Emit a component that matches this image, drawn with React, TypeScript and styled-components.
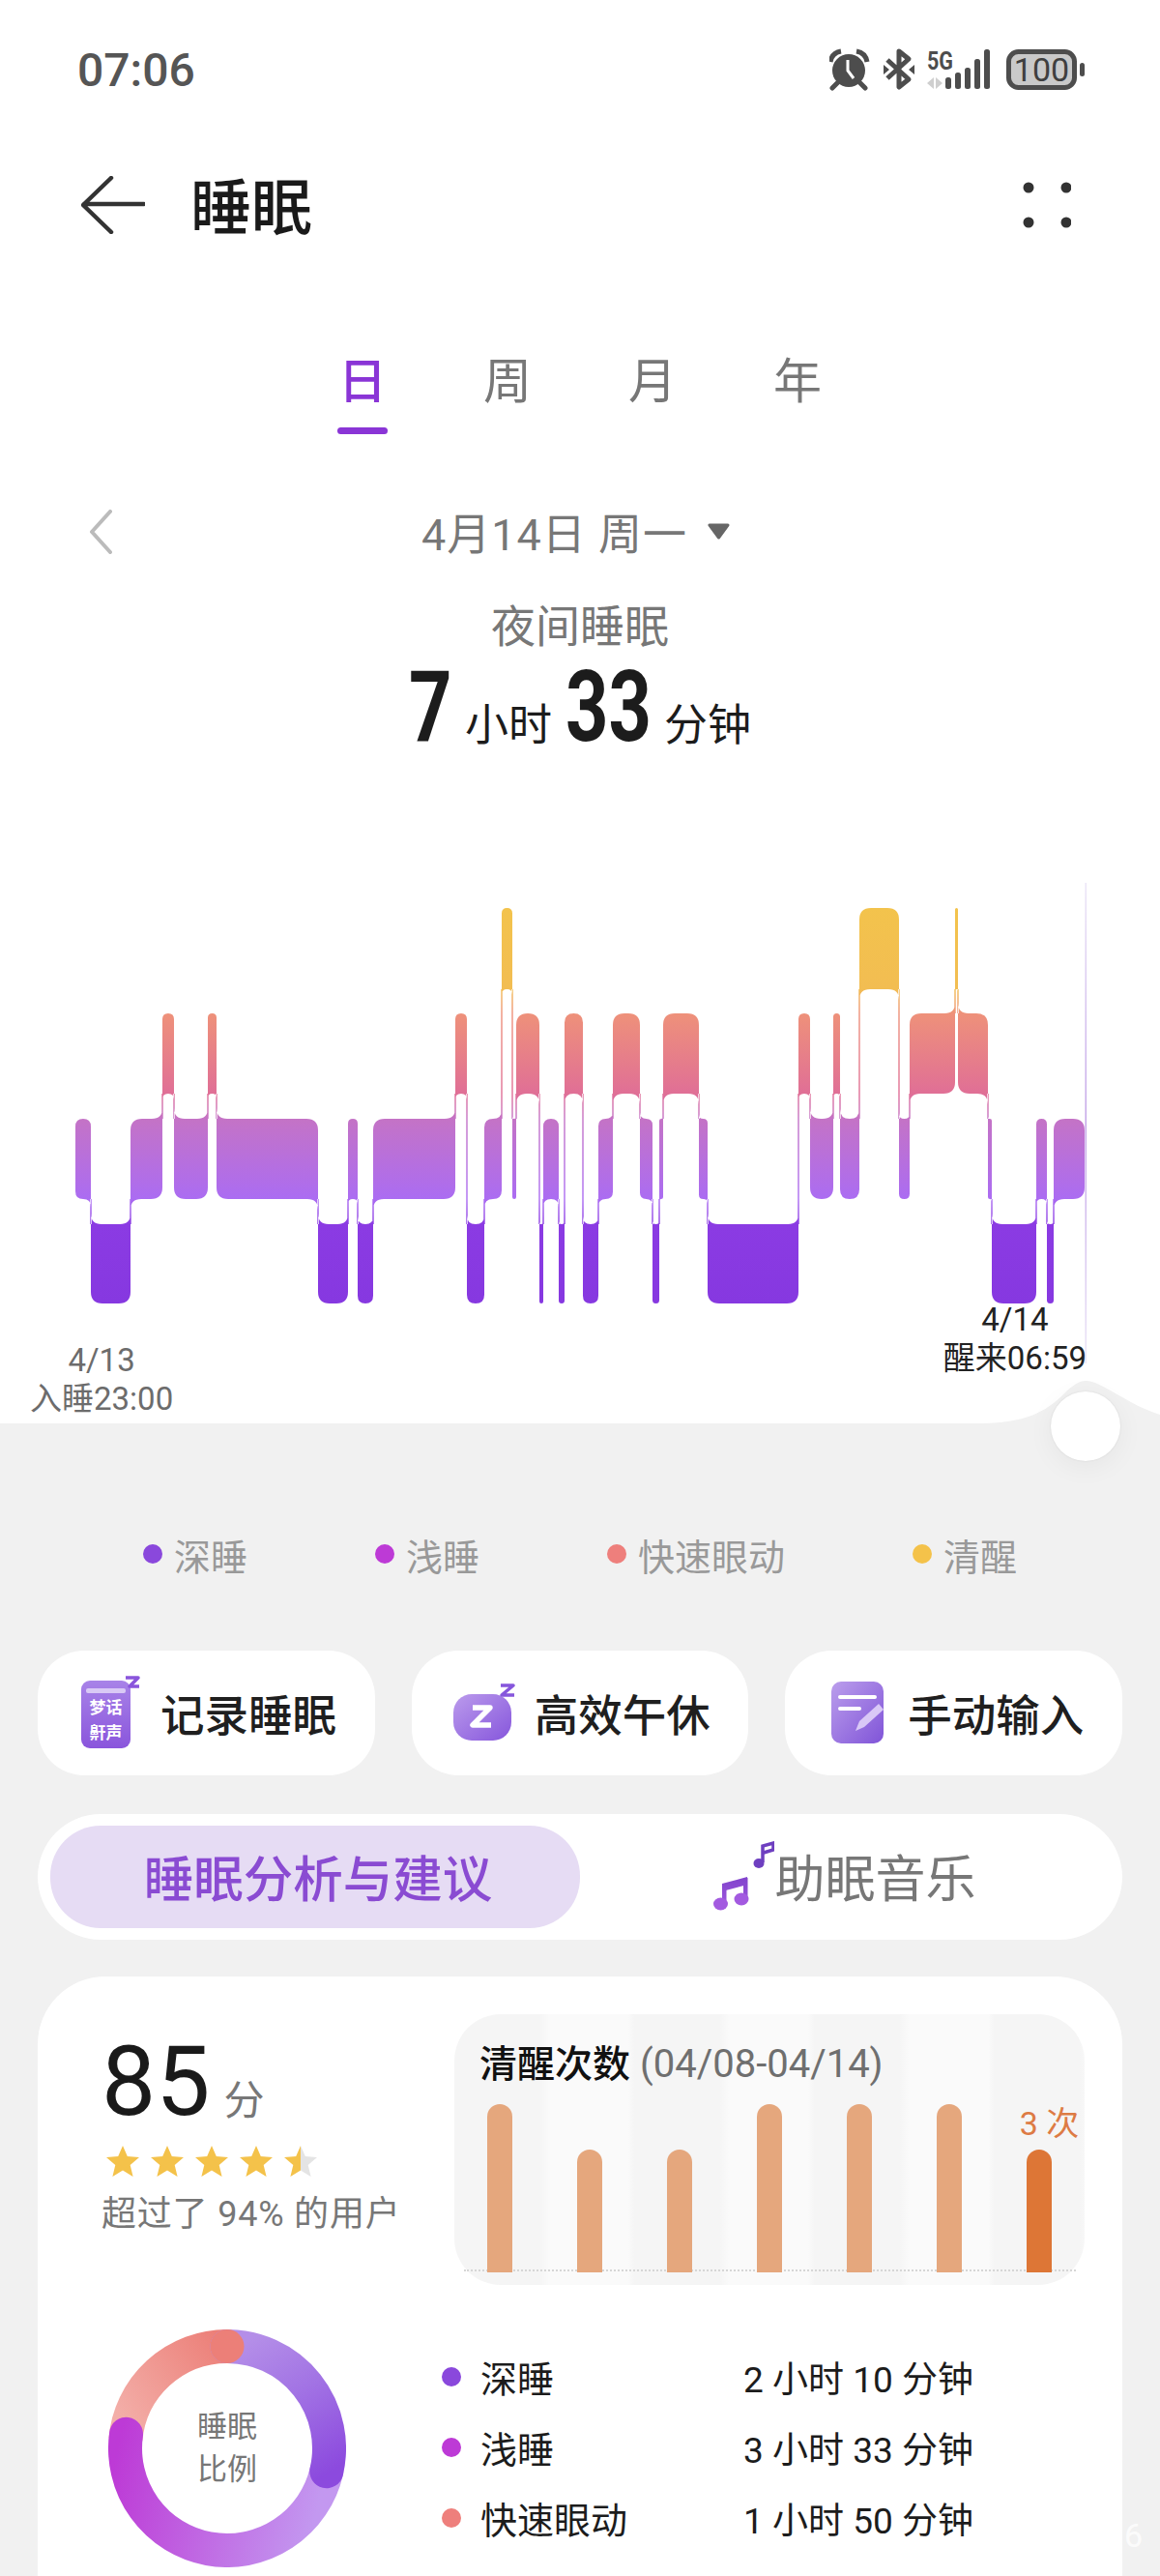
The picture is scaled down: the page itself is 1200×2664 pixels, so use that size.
import React from 'react';
import styled, { createGlobalStyle } from 'styled-components';

const GlobalStyle = createGlobalStyle`
  html, body {
    margin: 0;
    padding: 0;
    background: #f1f1f1;
  }
  body {
    font-family: Roboto, "Noto Sans CJK SC", sans-serif;
  }
`;

const Page = styled.div`
  position: relative;
  width: 1200px;
  height: 2664px;
  overflow: hidden;
  background: #f1f1f1;
`;

const Hero = styled.section`
  position: relative;
  height: 1472px;
  background: #fff;
`;

const StatusBar = styled.div`
  height: 144px;
  padding: 0 76px 0 80px;
  display: flex;
  align-items: center;
  justify-content: space-between;
`;

const Clock = styled.span`
  font-size: 48px;
  font-weight: 500;
  color: #555;
`;

const Header = styled.header`
  height: 136px;
  padding: 0 92px 0 84px;
  display: flex;
  align-items: center;
  gap: 47px;
`;

const PageTitle = styled.h1`
  margin: -6px 0 0;
  flex: 1;
  font-size: 63px;
  font-weight: 500;
  color: #1a1a1a;
`;

const PeriodTabs = styled.nav`
  display: flex;
  justify-content: center;
  padding-top: 85px;
`;

const PeriodTab = styled.div<{ $active?: boolean }>`
  width: 150px;
  display: flex;
  flex-direction: column;
  align-items: center;
  font-size: 50px;
  line-height: 60px;
  font-weight: ${(p) => (p.$active ? 500 : 400)};
  color: ${(p) => (p.$active ? '#8a35d6' : '#777')};

  &::after {
    content: '';
    width: 52px;
    height: 7px;
    margin-top: 17px;
    border-radius: 4px;
    background: ${(p) => (p.$active ? '#8a35d6' : 'transparent')};
  }
`;

const DateRow = styled.div`
  margin-top: 68px;
  height: 60px;
  padding: 0 92px;
  display: grid;
  grid-template-columns: 1fr auto 1fr;
  align-items: center;
`;

const DateLabel = styled.div`
  margin-right: 8px;
  display: flex;
  align-items: center;
  gap: 20px;
  font-size: 45px;
  letter-spacing: 1px;
  color: #777;
`;

const SubTitle = styled.div`
  margin-top: 41px;
  text-align: center;
  font-size: 46px;
  line-height: 60px;
  color: #777;
`;

const Duration = styled.div`
  margin-top: 3px;
  height: 100px;
  display: flex;
  justify-content: center;
  align-items: baseline;
  gap: 14px;
  color: #1c1c1c;
`;

const DurationNum = styled.span<{ $width: number }>`
  display: inline-block;
  width: ${(p) => p.$width}px;
  font-size: 102px;
  line-height: 100px;
  font-weight: 700;
  transform: scaleX(0.76);
  transform-origin: left center;
  white-space: nowrap;
`;

const DurationUnit = styled.span`
  font-size: 45px;
`;

const ChartSvg = styled.svg`
  display: block;
  margin-top: 132px;
  overflow: visible;
`;

const AxisLabels = styled.div`
  display: flex;
  justify-content: space-between;
  align-items: flex-start;
  padding: 0 76px 0 31px;
`;

const AxisLabel = styled.div<{ $end?: boolean }>`
  margin-top: ${(p) => (p.$end ? '-5px' : '37px')};
  text-align: center;
  font-size: 33px;
  line-height: 40px;
  color: ${(p) => (p.$end ? '#222' : '#6c6c6c')};
`;

const Hump = styled.svg`
  position: absolute;
  right: 0;
  bottom: 0;
`;

const Knob = styled.div`
  position: absolute;
  left: 1087px;
  bottom: -39px;
  width: 72px;
  height: 72px;
  border-radius: 50%;
  background: #fff;
  box-shadow: 0 6px 28px rgba(0, 0, 0, 0.05), 0 0 2px rgba(0, 0, 0, 0.1);
`;

const Legend = styled.div`
  margin-top: 110px;
  height: 50px;
  display: flex;
  justify-content: center;
  gap: 132px;
`;

const LegendItem = styled.div`
  display: flex;
  align-items: center;
  gap: 12px;
  font-size: 38px;
  color: #999;
`;

const Dot = styled.i<{ $color: string }>`
  display: block;
  flex: none;
  width: 20px;
  height: 20px;
  border-radius: 50%;
  background: ${(p) => p.$color};
`;

const Content = styled.div`
  padding: 75px 39px 0;
`;

const ActionRow = styled.div`
  display: grid;
  grid-template-columns: repeat(3, 1fr);
  gap: 38px;
`;

const ActionButton = styled.div`
  height: 129px;
  padding: 0 0 2px 36px;
  box-sizing: border-box;
  display: flex;
  align-items: center;
  gap: 13px;
  border-radius: 48px;
  background: #fff;
  font-size: 45.5px;
  font-weight: 500;
  color: #1f1f1f;
`;

const ActionIcon = styled.div`
  width: 78px;
  display: flex;
  justify-content: center;
`;

const SwitchBar = styled.div`
  margin-top: 40px;
  height: 130px;
  padding: 12px 13px;
  box-sizing: border-box;
  display: grid;
  grid-template-columns: 548px 1fr;
  border-radius: 65px;
  background: #fff;
`;

const SwitchTab = styled.div<{ $active?: boolean }>`
  padding: ${(p) => (p.$active ? '0 0 3px 6px' : '0 0 3px')};
  display: flex;
  align-items: center;
  justify-content: center;
  border-radius: 52px;
  font-size: ${(p) => (p.$active ? '51.5px' : '52px')};
  font-weight: ${(p) => (p.$active ? 500 : 400)};
  color: ${(p) => (p.$active ? '#8a4bd2' : '#777')};
  background: ${(p) => (p.$active ? '#e6dcf4' : 'transparent')};
`;

const Card = styled.section`
  margin-top: 38px;
  height: 700px;
  padding: 39px;
  box-sizing: border-box;
  border-radius: 70px;
  background: #fff;
`;

const CardTop = styled.div`
  display: flex;
`;

const ScoreBlock = styled.div`
  width: 392px;
  padding-left: 27px;
  box-sizing: border-box;
`;

const ScoreLine = styled.div`
  margin-top: 19px;
  display: flex;
  align-items: baseline;
  gap: 14px;
`;

const ScoreValue = styled.span`
  font-size: 100px;
  line-height: 102px;
  color: #1a1a1a;
`;

const ScoreUnit = styled.span`
  font-size: 42px;
  color: #777;
`;

const Stars = styled.div`
  margin: 13px 0 0 4px;
  display: flex;
  gap: 10px;
`;

const ScoreNote = styled.div`
  margin-top: 15px;
  font-size: 36px;
  letter-spacing: 0.8px;
  line-height: 44px;
  color: #777;
  white-space: nowrap;
`;

const WakePanel = styled.div`
  width: 652px;
  height: 280px;
  box-sizing: border-box;
  padding-top: 27px;
  border-radius: 48px;
  background: repeating-linear-gradient(
    90deg,
    #f5f5f5 0,
    #f5f5f5 88px,
    #fafafa 98px,
    #fafafa 180px,
    #f5f5f5 186.2px
  );
`;

const WakeTitle = styled.div`
  padding-left: 26px;
  font-size: 39px;
  line-height: 50px;
  font-weight: 500;
  color: #111;
`;

const WakeRange = styled.span`
  margin-left: 10px;
  font-size: 40px;
  font-weight: 400;
  color: #6f6f6f;
`;

const WakeBars = styled.div`
  position: relative;
  margin-top: 16px;
  height: 174px;
  display: grid;
  grid-template-columns: repeat(7, 1fr);
  align-items: end;

  &::before {
    content: '';
    position: absolute;
    left: 10px;
    right: 9px;
    bottom: 1px;
    border-top: 2px dotted #d6d6d6;
  }
`;

const WakeColumn = styled.div`
  position: relative;
  display: flex;
  flex-direction: column;
  align-items: center;
`;

const WakeCount = styled.div`
  margin: 0 0 7px 20px;
  font-size: 34px;
  line-height: 40px;
  color: #dd7b44;
  white-space: nowrap;
`;

const WakeBar = styled.div<{ $height: number; $current?: boolean }>`
  width: 26px;
  height: ${(p) => p.$height}px;
  border-radius: 13px 13px 0 0;
  background: ${(p) => (p.$current ? '#dd7636' : '#e5a77d')};
`;

const CardBottom = styled.div`
  margin-top: 46px;
  padding-left: 34px;
  display: flex;
  gap: 99px;
`;

const DonutWrap = styled.div`
  position: relative;
  width: 246px;
  height: 246px;
  flex: none;
`;

const DonutCaption = styled.div`
  position: absolute;
  inset: 0;
  display: flex;
  align-items: center;
  justify-content: center;
  text-align: center;
  font-size: 31px;
  line-height: 44px;
  color: #777;
`;

const RatioList = styled.div`
  padding-top: 12px;
`;

const RatioRow = styled.div`
  height: 73px;
  display: flex;
  align-items: center;
  font-size: 38px;
  color: #1c1c1c;
`;

const RatioLabel = styled.span`
  width: 272px;
  margin-left: 20px;
`;

const RatioValue = styled.span`
  font-size: 37px;
  white-space: pre;
`;

const Watermark = styled.div`
  position: absolute;
  right: 18px;
  bottom: 22px;
  font-size: 34px;
  color: rgba(255, 255, 255, 0.8);
`;

// chart levels, in page pixels: 0 awake, 1 rem, 2 light, 3 deep
const LEVELS = [
  { top: 939, bottom: 1023 },
  { top: 1048, bottom: 1131 },
  { top: 1157, bottom: 1240 },
  { top: 1266, bottom: 1348 },
];

const SEGMENTS: [number, number, number][] = [
  [78, 94, 2], [94, 135, 3], [135, 168, 2], [168, 180, 1], [180, 215, 2], [215, 224, 1],
  [224, 329, 2], [329, 360, 3], [360, 370, 2], [370, 386, 3], [386, 471, 2], [471, 483, 1],
  [483, 501, 3], [501, 519, 2], [519, 530, 0], [530, 534, 2], [534, 558, 1], [558, 562, 3],
  [562, 578, 2], [578, 584, 3], [584, 603, 1], [603, 619, 3], [619, 634, 2], [634, 662, 1],
  [662, 675, 2], [675, 682, 3], [682, 686, 2], [686, 723, 1], [723, 732, 2], [732, 826, 3],
  [826, 838, 1], [838, 862, 2], [862, 869, 1], [869, 889, 2], [889, 930, 0], [930, 941, 2],
  [941, 988, 1], [988, 991, 0], [991, 1022, 1], [1022, 1026, 2], [1026, 1072, 3], [1072, 1083, 2],
  [1083, 1090, 3], [1090, 1122, 2],
];

const buildChartPath = () => {
  let d = '';
  SEGMENTS.forEach(([x0, x1, level], i) => {
    const prev = SEGMENTS[i - 1];
    const next = SEGMENTS[i + 1];
    const { top, bottom } = LEVELS[level];
    const r = Math.min(12, (x1 - x0) / 2);
    const tl = !prev || prev[2] > level ? r : 0;
    const tr = !next || next[2] > level ? r : 0;
    const bl = !prev || prev[2] < level ? r : 0;
    const br = !next || next[2] < level ? r : 0;
    d += `M${x0 + tl} ${top}L${x1 - tr} ${top}Q${x1} ${top} ${x1} ${top + tr}L${x1} ${bottom - br}Q${x1} ${bottom} ${x1 - br} ${bottom}L${x0 + bl} ${bottom}Q${x0} ${bottom} ${x0} ${bottom - bl}L${x0} ${top + tl}Q${x0} ${top} ${x0 + tl} ${top}Z`;

    if (!next) return;
    // thin edge and the two fillets that join this block to the next one
    const x = x1;
    const nextIsUpper = next[2] < level;
    const upper = nextIsUpper ? next : SEGMENTS[i];
    const lower = nextIsUpper ? SEGMENTS[i] : next;
    const upperSide = nextIsUpper ? 1 : -1;
    const uy = LEVELS[upper[2]].bottom;
    const ly = LEVELS[lower[2]].top;
    const ur = Math.min(11, (upper[1] - upper[0]) / 2);
    const lr = Math.min(11, (lower[1] - lower[0]) / 2);
    d += `M${x - 0.7} ${uy}L${x + 0.7} ${uy}L${x + 0.7} ${ly}L${x - 0.7} ${ly}Z`;
    d += `M${x} ${uy}L${x + upperSide * ur} ${uy}Q${x} ${uy} ${x} ${uy + ur}Z`;
    d += `M${x} ${ly}L${x - upperSide * lr} ${ly}Q${x} ${ly} ${x} ${ly - lr}Z`;
  });
  return d;
};

const stop = (y: number) => `${((y - 939) / 409) * 100}%`;

const SleepChart = () => (
  <ChartSvg width="1200" height="437" viewBox="0 913 1200 437">
    <defs>
      <linearGradient id="stage" gradientUnits="userSpaceOnUse" x1="0" y1="939" x2="0" y2="1348">
        <stop offset={stop(939)} stopColor="#f3c34c" />
        <stop offset={stop(1023)} stopColor="#f2bd52" />
        <stop offset={stop(1048)} stopColor="#ee917a" />
        <stop offset={stop(1131)} stopColor="#e06f96" />
        <stop offset={stop(1157)} stopColor="#c473c6" />
        <stop offset={stop(1240)} stopColor="#ab6cf2" />
        <stop offset={stop(1266)} stopColor="#8b3be3" />
        <stop offset={stop(1348)} stopColor="#8638e0" />
      </linearGradient>
      <linearGradient id="cursor" gradientUnits="userSpaceOnUse" x1="0" y1="913" x2="0" y2="1410">
        <stop offset="0%" stopColor="#ece6f7" />
        <stop offset="50%" stopColor="#c4a6e8" />
        <stop offset="100%" stopColor="#ece6f7" />
      </linearGradient>
    </defs>
    <rect x="1122.5" y="913" width="1.5" height="497" fill="url(#cursor)" />
    <path d={buildChartPath()} fill="url(#stage)" />
  </ChartSvg>
);

const StatusIcons = () => (
  <svg width="266" height="46" viewBox="858 50 266 46">
    {/* alarm */}
    <circle cx="878" cy="74" r="17" fill="#4d4d4d" />
    <path d="M877 63v11l6 8" fill="none" stroke="#fff" strokeWidth="3" />
    <path d="M859 65c1-6 5-10 11-11M897 65c-1-6-5-10-11-11" fill="none" stroke="#4d4d4d" strokeWidth="5" />
    <path d="M866 87l-5 5M890 87l5 5" stroke="#4d4d4d" strokeWidth="5" strokeLinecap="round" />
    {/* bluetooth */}
    <path d="M918 63l22 20-10 8V54l10 8-22 20" fill="none" stroke="#4d4d4d" strokeWidth="5" strokeLinejoin="round" />
    <path d="M914 68l6 5-6 5zM946 68l-6 5 6 5z" fill="#4d4d4d" />
    {/* network */}
    <text x="959" y="73" fontFamily="Roboto" fontWeight="700" fontSize="25" fill="#4d4d4d" textLength="27" lengthAdjust="spacingAndGlyphs">5G</text>
    <path d="M966 81v12l-7-6zM968 81v12l7-6z" fill="#cfcfcf" />
    {[81, 76, 71, 62, 52].map((top, i) => (
      <rect key={top} x={978 + i * 10} y={top} width="6" height={93 - top} rx="2.5" fill="#4d4d4d" />
    ))}
    {/* battery */}
    <rect x="1043.5" y="54.5" width="68" height="37" rx="10" fill="#c9c9c9" stroke="#4d4d4d" strokeWidth="5" />
    <text x="1077.5" y="85" textAnchor="middle" fontFamily="Roboto" fontSize="34" fill="#3f3f3f">100</text>
    <rect x="1117" y="66" width="5" height="14" rx="2.5" fill="#4d4d4d" />
  </svg>
);

const BackArrow = () => (
  <svg width="66" height="60" viewBox="0 0 66 60">
    <path d="M31 2L2 30l29 28M3 29h62" fill="none" stroke="#333" strokeWidth="4.5" strokeLinecap="round" strokeLinejoin="round" />
  </svg>
);

const MoreDots = () => (
  <svg width="50" height="48" viewBox="0 0 50 48">
    <circle cx="6" cy="6" r="5.5" fill="#333" />
    <circle cx="45" cy="6" r="5.5" fill="#333" />
    <circle cx="6" cy="42" r="5.5" fill="#333" />
    <circle cx="45" cy="42" r="5.5" fill="#333" />
  </svg>
);

const PrevChevron = () => (
  <svg width="24" height="46" viewBox="0 0 24 46">
    <path d="M22 2L3 23l19 21" fill="none" stroke="#bbb" strokeWidth="4" strokeLinecap="round" strokeLinejoin="round" />
  </svg>
);

const DropTriangle = () => (
  <svg width="25" height="17" viewBox="0 0 25 17">
    <path d="M3 2h19l-9.5 13z" fill="#666" stroke="#666" strokeWidth="3" strokeLinejoin="round" />
  </svg>
);

const RecordIcon = () => (
  <svg width="62" height="76" viewBox="0 0 62 76">
    <defs>
      <linearGradient id="rec" x1="0" y1="0" x2="0" y2="1">
        <stop offset="0%" stopColor="#a883e8" />
        <stop offset="100%" stopColor="#8a55dc" />
      </linearGradient>
    </defs>
    <rect x="1" y="5" width="51" height="70" rx="9" fill="url(#rec)" />
    <rect x="6" y="13" width="41" height="5" rx="2" fill="#d9c9f5" />
    <text x="26.5" y="39" textAnchor="middle" fontSize="17" fontWeight="700" fill="#fff" fontFamily="'Noto Sans CJK SC'">梦话</text>
    <text x="26.5" y="65" textAnchor="middle" fontSize="17" fontWeight="700" fill="#fff" fontFamily="'Noto Sans CJK SC'">鼾声</text>
    <path d="M47 2h13l-9 9h10" fill="none" stroke="#8a55dc" strokeWidth="3.5" strokeLinejoin="round" />
  </svg>
);

const NapIcon = () => (
  <svg width="66" height="60" viewBox="0 0 66 60">
    <defs>
      <linearGradient id="nap" x1="0" y1="0" x2="1" y2="1">
        <stop offset="0%" stopColor="#bb9bec" />
        <stop offset="100%" stopColor="#8656dc" />
      </linearGradient>
    </defs>
    <rect x="1" y="11" width="60" height="48" rx="19" fill="url(#nap)" />
    <path d="M21 25h18L21 43h19" fill="none" stroke="#fff" strokeWidth="5.5" strokeLinejoin="round" />
    <path d="M50 2h13l-12 10h13" fill="none" stroke="#8656dc" strokeWidth="3.5" strokeLinejoin="round" />
  </svg>
);

const ManualIcon = () => (
  <svg width="56" height="66" viewBox="0 0 56 66">
    <defs>
      <linearGradient id="manual" x1="0" y1="0" x2="1" y2="1">
        <stop offset="0%" stopColor="#bb9eec" />
        <stop offset="100%" stopColor="#8054d8" />
      </linearGradient>
    </defs>
    <rect x="1" y="1" width="54" height="64" rx="10" fill="url(#manual)" />
    <path d="M10 17h36M10 29h20" stroke="#fff" strokeWidth="4" strokeLinecap="round" />
    <path d="M26 52l4-10 20-18 5 6-20 18z" fill="#d9c8f6" />
  </svg>
);

const MusicIcon = () => (
  <svg width="63" height="72" viewBox="0 0 63 72">
    <defs>
      <linearGradient id="note" gradientUnits="userSpaceOnUse" x1="0" y1="30" x2="0" y2="72">
        <stop offset="0%" stopColor="#7a3fc8" />
        <stop offset="100%" stopColor="#a35ae0" />
      </linearGradient>
    </defs>
    <path d="M9 44l26-7v8l-26 7z" fill="url(#note)" />
    <rect x="9" y="44" width="4.5" height="21" fill="url(#note)" />
    <rect x="31" y="38" width="4.5" height="22" fill="url(#note)" />
    <ellipse cx="7.5" cy="65" rx="7.5" ry="6.5" fill="#a35ae0" />
    <ellipse cx="29" cy="60" rx="7.5" ry="6.5" fill="#a35ae0" />
    <path d="M51 22V5l11-3v7l-10 3" fill="none" stroke="#6e3fc0" strokeWidth="3.5" />
    <ellipse cx="47" cy="23" rx="5.5" ry="5" fill="#6e3fc0" />
  </svg>
);

const Star = ({ half }: { half?: boolean }) => (
  <svg width="36" height="36" viewBox="0 0 36 36">
    <defs>
      <linearGradient id="halfStar">
        <stop offset="50%" stopColor="#f4c24a" />
        <stop offset="50%" stopColor="#e4e4e4" />
      </linearGradient>
    </defs>
    <path
      d="M18 2l4.8 11 12.2 1-9.3 8 2.9 12L18 27.6 7.4 34l2.9-12L1 14l12.2-1z"
      fill={half ? 'url(#halfStar)' : '#f4c24a'}
    />
  </svg>
);

// point on the ring, clockwise from twelve o'clock
const ringPoint = (deg: number) => {
  const rad = ((deg - 90) * Math.PI) / 180;
  return [123 + 105.5 * Math.cos(rad), 123 + 105.5 * Math.sin(rad)];
};

const ringArc = (from: number, to: number) => {
  const [x0, y0] = ringPoint(from);
  const [x1, y1] = ringPoint(to);
  return `M${x0} ${y0}A105.5 105.5 0 ${to - from > 180 ? 1 : 0} 1 ${x1} ${y1}`;
};

const SleepDonut = () => (
  <DonutWrap>
    <svg width="246" height="246" viewBox="0 0 246 246">
      <defs>
        <linearGradient id="ringDeep" gradientUnits="userSpaceOnUse" x1="140" y1="15" x2="225" y2="150">
          <stop offset="0%" stopColor="#b48ee8" />
          <stop offset="45%" stopColor="#a273e4" />
          <stop offset="100%" stopColor="#8c4ade" />
        </linearGradient>
        <linearGradient id="ringLight" gradientUnits="userSpaceOnUse" x1="225" y1="150" x2="15" y2="100">
          <stop offset="0%" stopColor="#c398f0" />
          <stop offset="100%" stopColor="#bd3ad6" />
        </linearGradient>
        <linearGradient id="ringRem" gradientUnits="userSpaceOnUse" x1="15" y1="95" x2="123" y2="18">
          <stop offset="0%" stopColor="#f3aea8" />
          <stop offset="100%" stopColor="#ec7f78" />
        </linearGradient>
      </defs>
      <path d={ringArc(275, 360)} fill="none" stroke="url(#ringRem)" strokeWidth="35" />
      <path d={ringArc(103, 278)} fill="none" stroke="url(#ringLight)" strokeWidth="35" strokeLinecap="round" />
      <path d={ringArc(0, 103)} fill="none" stroke="url(#ringDeep)" strokeWidth="35" strokeLinecap="round" />
      <circle cx="123" cy="17.5" r="17.5" fill="#ec7f78" />
    </svg>
    <DonutCaption>
      睡眠
      <br />
      比例
    </DonutCaption>
  </DonutWrap>
);

const LEGEND = [
  { label: '深睡', color: '#8a48dc' },
  { label: '浅睡', color: '#bd3ad6' },
  { label: '快速眼动', color: '#ee7f7c' },
  { label: '清醒', color: '#f4c24a' },
];

const WAKE_HEIGHTS = [174, 127, 127, 174, 174, 174, 127];

const RATIOS = [
  { label: '深睡', value: '2 小时 10 分钟', color: '#8a48dc' },
  { label: '浅睡', value: '3 小时 33 分钟', color: '#bd3ad6' },
  { label: '快速眼动', value: '1 小时 50 分钟', color: '#ee7f7c' },
];

const App = () => {
  return (
    <Page>
      <GlobalStyle />
      <Hero>
        <StatusBar>
          <Clock>07:06</Clock>
          <StatusIcons />
        </StatusBar>
        <Header>
          <BackArrow />
          <PageTitle>睡眠</PageTitle>
          <MoreDots />
        </Header>
        <PeriodTabs>
          <PeriodTab $active>日</PeriodTab>
          <PeriodTab>周</PeriodTab>
          <PeriodTab>月</PeriodTab>
          <PeriodTab>年</PeriodTab>
        </PeriodTabs>
        <DateRow>
          <PrevChevron />
          <DateLabel>
            4月14日 周一
            <DropTriangle />
          </DateLabel>
        </DateRow>
        <SubTitle>夜间睡眠</SubTitle>
        <Duration>
          <DurationNum $width={44}>7</DurationNum>
          <DurationUnit>小时</DurationUnit>
          <DurationNum $width={88}>33</DurationNum>
          <DurationUnit>分钟</DurationUnit>
        </Duration>
        <SleepChart />
        <AxisLabels>
          <AxisLabel>
            4/13
            <br />
            入睡23:00
          </AxisLabel>
          <AxisLabel $end>
            4/14
            <br />
            醒来06:59
          </AxisLabel>
        </AxisLabels>
        <Hump width="200" height="50" viewBox="0 0 200 50">
          <path d="M13 50C60 50 82 38 100 20 110 10 117 6 123 6 140 6 165 30 200 41V50Z" fill="#f1f1f1" />
        </Hump>
        <Knob />
      </Hero>

      <Legend>
        {LEGEND.map((item) => (
          <LegendItem key={item.label}>
            <Dot $color={item.color} />
            {item.label}
          </LegendItem>
        ))}
      </Legend>

      <Content>
        <ActionRow>
          <ActionButton>
            <ActionIcon><RecordIcon /></ActionIcon>
            记录睡眠
          </ActionButton>
          <ActionButton>
            <ActionIcon><NapIcon /></ActionIcon>
            高效午休
          </ActionButton>
          <ActionButton>
            <ActionIcon><ManualIcon /></ActionIcon>
            手动输入
          </ActionButton>
        </ActionRow>

        <SwitchBar>
          <SwitchTab $active>睡眠分析与建议</SwitchTab>
          <SwitchTab>
            <MusicIcon />
            助眠音乐
          </SwitchTab>
        </SwitchBar>

        <Card>
          <CardTop>
            <ScoreBlock>
              <ScoreLine>
                <ScoreValue>85</ScoreValue>
                <ScoreUnit>分</ScoreUnit>
              </ScoreLine>
              <Stars>
                <Star />
                <Star />
                <Star />
                <Star />
                <Star half />
              </Stars>
              <ScoreNote>超过了 94% 的用户</ScoreNote>
            </ScoreBlock>
            <WakePanel>
              <WakeTitle>
                清醒次数
                <WakeRange>(04/08-04/14)</WakeRange>
              </WakeTitle>
              <WakeBars>
                {WAKE_HEIGHTS.map((height, i) => (
                  <WakeColumn key={i}>
                    {i === 6 && <WakeCount>3 次</WakeCount>}
                    <WakeBar $height={height} $current={i === 6} />
                  </WakeColumn>
                ))}
              </WakeBars>
            </WakePanel>
          </CardTop>
          <CardBottom>
            <SleepDonut />
            <RatioList>
              {RATIOS.map((row) => (
                <RatioRow key={row.label}>
                  <Dot $color={row.color} />
                  <RatioLabel>{row.label}</RatioLabel>
                  <RatioValue>{row.value}</RatioValue>
                </RatioRow>
              ))}
            </RatioList>
          </CardBottom>
        </Card>
      </Content>
      <Watermark>6</Watermark>
    </Page>
  );
};

export default App;
